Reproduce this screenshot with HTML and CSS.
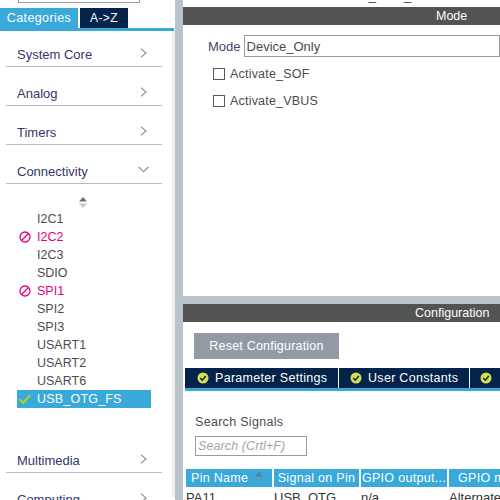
FILE: index.html
```html
<!DOCTYPE html>
<html lang="en">
<head>
    <meta charset="UTF-8">
    <title>USB_OTG_FS Configuration</title>
    <link rel="stylesheet" href="styles.css">
</head>
<body>
    <div class="app">
        <aside class="sidebar">
            <div class="search-top"></div>
            <div class="tabs">
                <div class="tab tab-active">Categories</div>
                <div class="tab tab-dark">A-&gt;Z</div>
            </div>
            <div class="sidebar-body">
                <div class="cat-row"><span>System Core</span><svg class="chev" viewBox="0 0 7 10"><path d="M1 .7l5 4.300-5 4.300"/></svg></div>
                <div class="cat-row"><span>Analog</span><svg class="chev" viewBox="0 0 7 10"><path d="M1 .7l5 4.300-5 4.300"/></svg></div>
                <div class="cat-row"><span>Timers</span><svg class="chev" viewBox="0 0 7 10"><path d="M1 .7l5 4.300-5 4.300"/></svg></div>
                <div class="cat-row"><span>Connectivity</span><svg class="chev-down" viewBox="0 0 11 7"><path d="M.7 1l4.800 4.800L10.300 1"/></svg></div>
                <div class="sort-arrows">
                    <svg width="8" height="11" viewBox="0 0 8 11"><path d="M4 0l4 4.500H0z" fill="#6c6f70"/><path d="M4 11l4-4.500H0z" fill="#c6cacc"/></svg>
                </div>
                <ul class="ip-list">
                    <li>I2C1</li>
                    <li class="blocked"><svg class="ico" viewBox="0 0 12 12"><circle cx="6" cy="6" r="5"/><path d="M2.500 9.500l7-7"/></svg>I2C2</li>
                    <li>I2C3</li>
                    <li>SDIO</li>
                    <li class="blocked"><svg class="ico" viewBox="0 0 12 12"><circle cx="6" cy="6" r="5"/><path d="M2.500 9.500l7-7"/></svg>SPI1</li>
                    <li>SPI2</li>
                    <li>SPI3</li>
                    <li>USART1</li>
                    <li>USART2</li>
                    <li>USART6</li>
                    <li class="selected"><svg class="ico check" viewBox="0 0 12 12"><path d="M.5 6l3.500 4L11.500 2"/></svg>USB_OTG_FS</li>
                </ul>
                <div class="cat-row"><span>Multimedia</span><svg class="chev" viewBox="0 0 7 10"><path d="M1 .7l5 4.300-5 4.300"/></svg></div>
                <div class="cat-row"><span>Computing</span><svg class="chev" viewBox="0 0 7 10"><path d="M1 .7l5 4.300-5 4.300"/></svg></div>
            </div>
        </aside>

        <main class="main">
            <section class="mode-panel">
                <div class="page-title">USB_OTG_FS Mode and Configuration</div>
                <div class="panel-title mode-title">Mode</div>
                <div class="mode-row">
                    <label class="mode-label">Mode</label>
                    <div class="mode-select">Device_Only</div>
                </div>
                <div class="check-row"><span class="checkbox"></span>Activate_SOF</div>
                <div class="check-row"><span class="checkbox"></span>Activate_VBUS</div>
            </section>

            <section class="config-panel">
                <div class="panel-title config-title">Configuration</div>
                <button class="reset-btn">Reset Configuration</button>
                <div class="config-tabs">
                    <div class="config-tab"><svg class="ok" viewBox="0 0 12 12"><circle cx="6" cy="6" r="5.500"/><path d="M3.200 6l2.100 2.200L8.800 4"/></svg>Parameter Settings</div>
                    <div class="config-tab"><svg class="ok" viewBox="0 0 12 12"><circle cx="6" cy="6" r="5.500"/><path d="M3.200 6l2.100 2.200L8.800 4"/></svg>User Constants</div>
                    <div class="config-tab"><svg class="ok" viewBox="0 0 12 12"><circle cx="6" cy="6" r="5.500"/><path d="M3.200 6l2.100 2.200L8.800 4"/></svg></div>
                </div>
                <div class="search-label">Search Signals</div>
                <div class="search-box">Search (Crtl+F)</div>
                <table class="signals">
                    <thead>
                        <tr>
                            <th class="col-pin">Pin Name <svg class="th-sort" width="8" height="11" viewBox="0 0 8 11"><path d="M4 0l4 4.500H0z" fill="#5f7f90"/><path d="M4 11l4-4.500H0z" fill="#5d9cc0"/></svg></th>
                            <th class="col-signal">Signal on Pin</th>
                            <th class="col-output">GPIO output...</th>
                            <th class="col-mode">GPIO mode</th>
                        </tr>
                    </thead>
                    <tbody>
                        <tr><td>PA11</td><td>USB_OTG</td><td>n/a</td><td>Alternate</td></tr>
                    </tbody>
                </table>
            </section>
        </main>
    </div>
</body>
</html>
```

FILE: styles.css
```css
* { box-sizing: border-box; }
html, body { margin: 0; height: 100%; overflow: hidden; }
body { font-family: "Liberation Sans", Arial, sans-serif; font-size: 13px; color: #3c3c46; background: #fff; }

.app { display: flex; width: 500px; height: 500px; overflow: hidden; }

.sidebar { width: 175px; flex-shrink: 0; background: #fff; }
.sidebar-body { height: 469px; margin-top: -3px; border-right: 3px solid #eceff0; }
.search-top { width: 122px; height: 3px; margin-left: 18px; border: 1px solid #9a9fa3; border-top: 0; }
.tabs { display: flex; gap: 2px; width: 174px; margin-top: 5px; height: 23px; border-bottom: 3px solid #39a9dc; position: relative; }
.tab { color: #fff; font-size: 12px; text-align: center; line-height: 20px; height: 20px; }
.tab-active { width: 78px; background: #39a9dc; font-size: 12.500px; letter-spacing: 0.400px; }
.tab-dark { width: 48px; background: #03234b; letter-spacing: 0.400px; }

.cat-row { display: flex; justify-content: space-between; align-items: center; height: 39px; margin-left: 6px; width: 156px; padding: 14px 15px 0 11px; border-bottom: 1px solid #b2bdc3; color: #35356b; }
.chev { width: 7px; height: 10px; margin-top: -3px; fill: none; stroke: #8a8d90; stroke-width: 1.100; }
.chev-down { width: 11px; height: 7px; margin: -4px -2px 0 0; fill: none; stroke: #8a8d90; stroke-width: 1.100; }

.sort-arrows { height: 26px; padding-top: 13px; margin-left: 79px; line-height: 0; }
.ip-list { list-style: none; margin: 0 0 26px 17px; padding: 0 0 0 20px; width: 134px; }
.ip-list li { position: relative; height: 18px; line-height: 19px; font-size: 12.500px; color: #4c4c50; }
.ip-list .blocked { color: #e6007e; }
.ip-list .selected { background: #39a9dc; color: #fff; margin-left: -20px; padding-left: 20px; letter-spacing: 0.200px; }
.ico { position: absolute; left: -18px; top: 3px; width: 12px; height: 12px; fill: none; stroke: #e6007e; stroke-width: 1.300; }
.ip-list .selected .ico { left: 2px; }
.ico.check { stroke: #b4d019; stroke-width: 2; }

.main { flex: 1; min-width: 0; background: #b9c4ca; padding-left: 8px; }
.mode-panel { height: 296px; background: #fff; overflow: hidden; }
.page-title { height: 19px; margin-top: -12px; padding-left: 159px; color: #3c3c46; white-space: nowrap; }
.panel-title { height: 18px; line-height: 18px; background: #525453; color: #fff; font-size: 12.500px; }
.mode-title { padding-left: 253px; }
.config-title { padding-left: 232px; }

.mode-row { display: flex; align-items: center; gap: 3px; margin: 10px 0 0 25px; color: #46466a; }
.mode-select { width: 400px; height: 22px; line-height: 21px; padding-left: 2px; border: 1px solid #9b9b9b; color: #4a4a4a; }
.check-row { display: flex; align-items: center; gap: 5px; height: 27px; margin-left: 30px; color: #4c4c50; font-size: 12.500px; letter-spacing: 0.200px; }
.mode-row + .check-row { margin-top: 3px; }
.checkbox { width: 12px; height: 12px; border: 1px solid #58595b; }

.config-panel { height: 196px; margin-top: 8px; background: #fff; overflow: hidden; }
.reset-btn { display: block; width: 145px; height: 26px; margin: 11px 0 0 11px; border: 0; background: #929ba3; color: #fff; font: 12.500px "Liberation Sans", Arial, sans-serif; letter-spacing: 0.200px; }
.config-tabs { display: flex; height: 23px; margin: 9px 0 0 2px; background: #03234b; border-bottom: 3px solid #39a9dc; white-space: nowrap; overflow: hidden; }
.config-tab { display: flex; align-items: center; gap: 6px; flex-shrink: 0; height: 20px; padding-left: 12px; border-right: 1px solid #fff; color: #fff; font-size: 12.500px; letter-spacing: 0.300px; }
.config-tab:nth-child(1) { width: 154px; }
.config-tab:nth-child(2) { width: 131px; padding-left: 11px; }
.config-tab:nth-child(3) { padding-left: 10px; border-right: 0; }
.ok { width: 12px; height: 12px; fill: #d6e04a; }
.ok path { fill: none; stroke: #03234b; stroke-width: 1.500; }

.search-label { margin: 24px 0 0 12px; color: #4c4c50; font-size: 12.500px; letter-spacing: 0.300px; }
.search-box { width: 112px; height: 20px; margin: 7px 0 0 12px; padding-left: 2px; line-height: 19px; border: 1px solid #9b9b9b; color: #a5a5a5; font-style: italic; font-size: 12.500px; letter-spacing: 0.100px; }

.signals { width: 340px; margin: 13px 0 0 1px; table-layout: fixed; border-collapse: separate; border-spacing: 2px 0; font-size: 13px; white-space: nowrap; }
.signals th { height: 18px; padding: 0; background: #39a9dc; color: #fff; font-weight: normal; font-size: 12.500px; letter-spacing: 0.300px; overflow: hidden; }
.signals td { height: 18px; padding: 3px 0 0; color: #333; overflow: hidden; }
.signals .col-pin { width: 86px; padding-left: 5px; text-align: left; }
.col-signal { width: 85px; }
.col-output { width: 86px; }
.signals .col-mode { padding-left: 9px; text-align: left; }
.th-sort { margin-left: 3px; vertical-align: -1px; }
```
